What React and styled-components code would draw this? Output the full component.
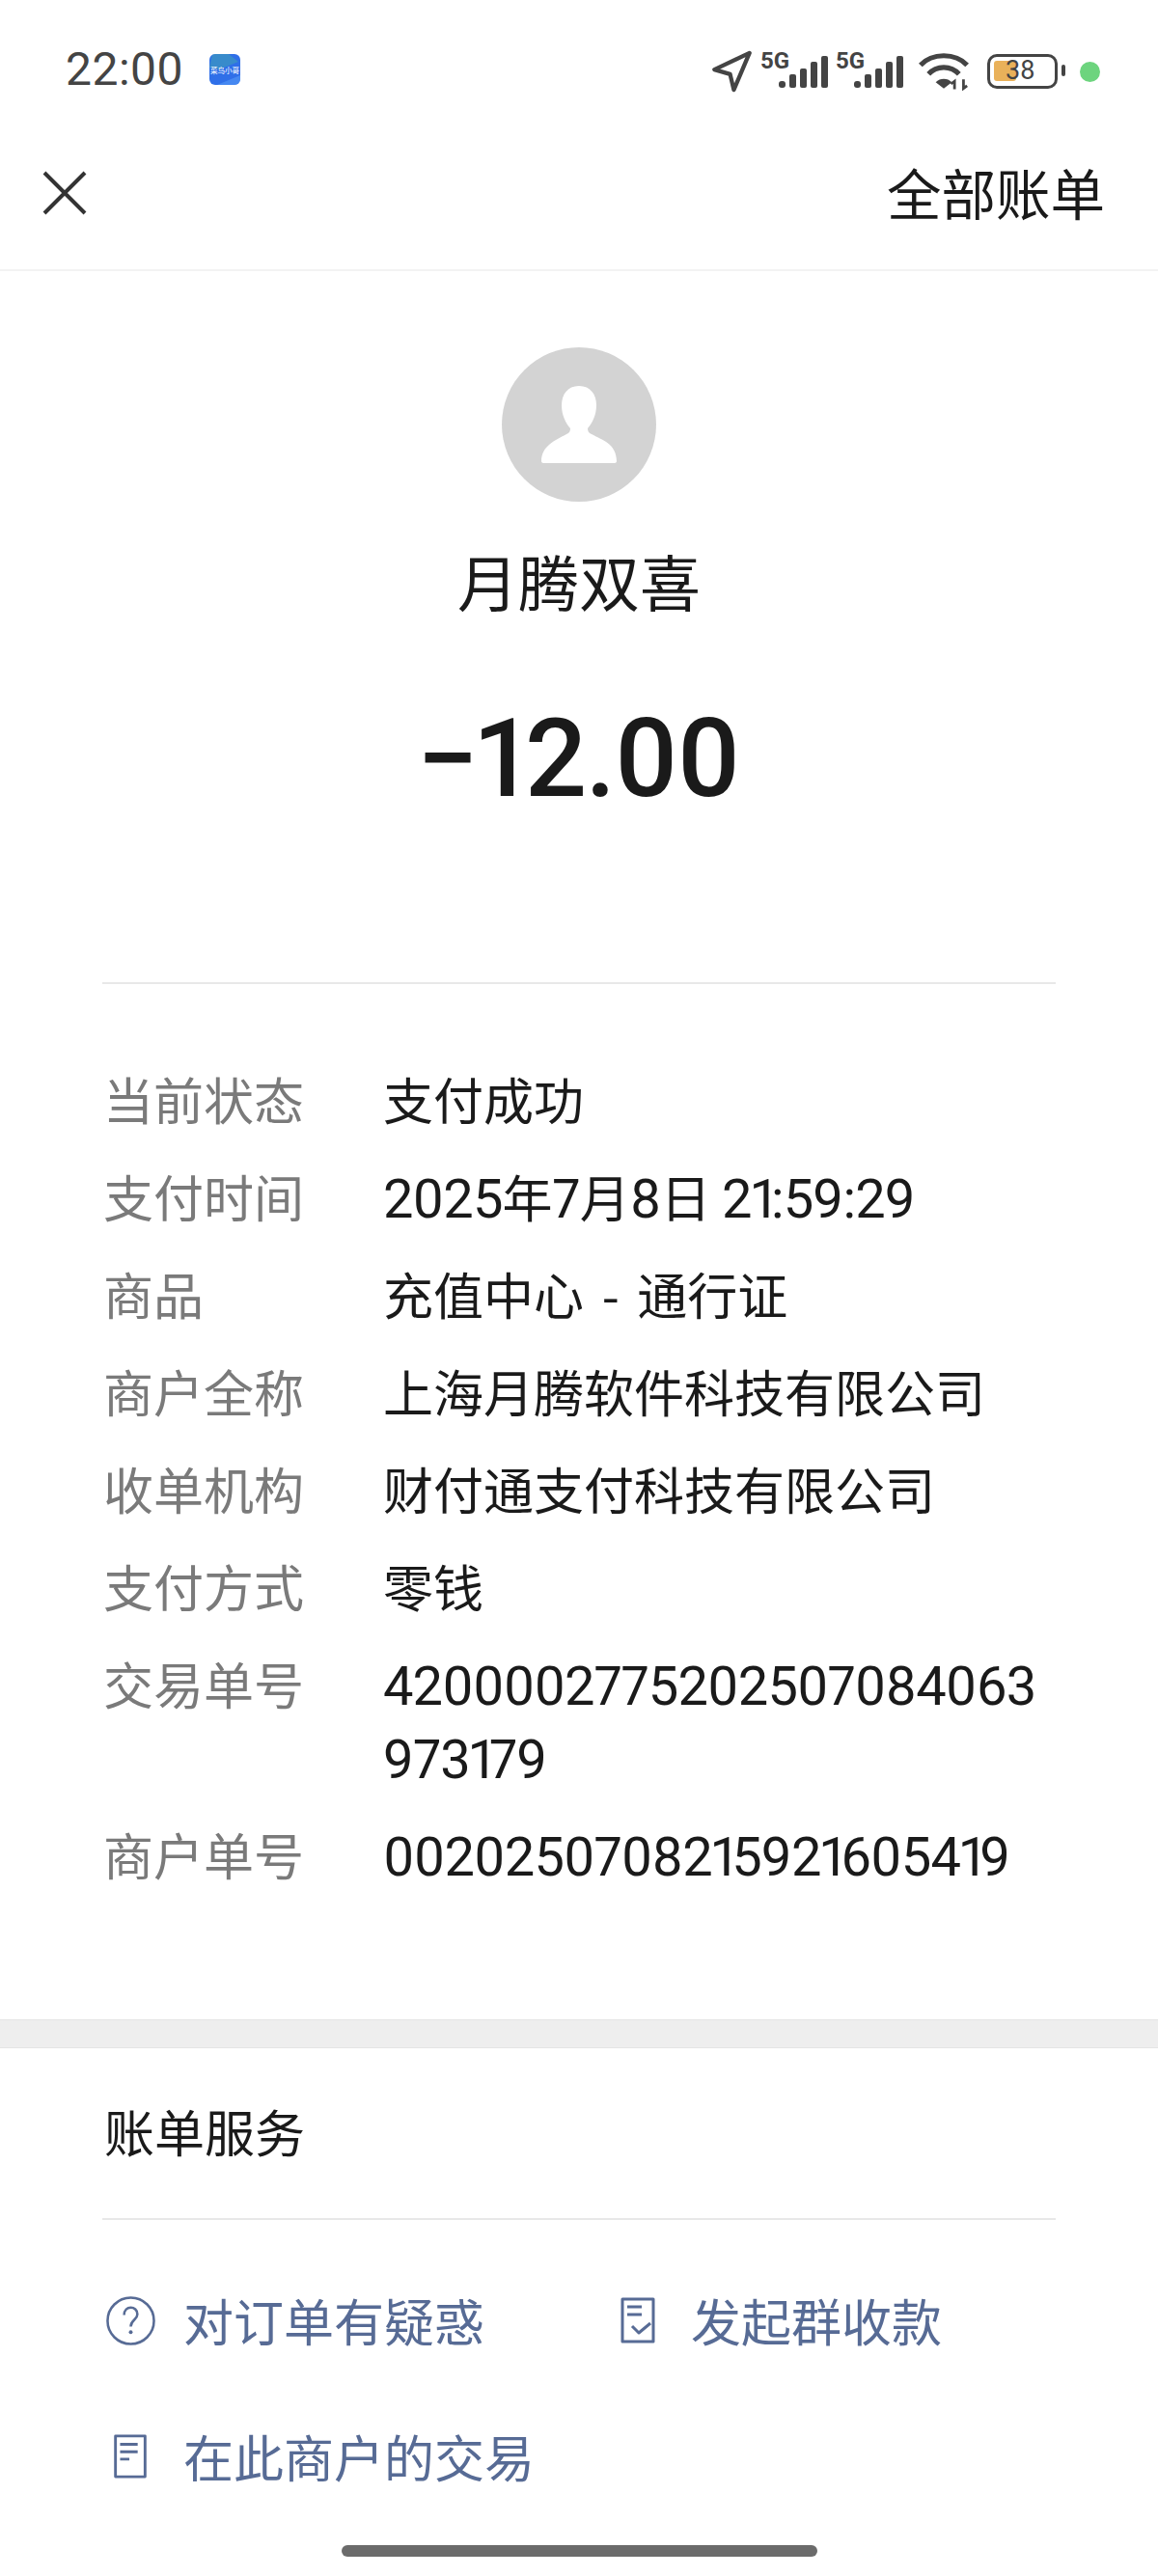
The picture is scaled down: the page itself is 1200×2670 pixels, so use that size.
import styled, { createGlobalStyle } from "styled-components";

const FONT = `Roboto, "Noto Sans CJK SC", sans-serif`;
const CJK = `"Noto Sans CJK SC", sans-serif`;

const GlobalStyle = createGlobalStyle`
  html, body {
    margin: 0;
    padding: 0;
    background: #fff;
  }
`;

const rows = [
  { label: "当前状态", value: "支付成功" },
  { label: "支付时间", value: "2025年7月8日 21:59:29" },
  { label: "商品", value: "充值中心 - 通行证", spaced: true },
  { label: "商户全称", value: "上海月腾软件科技有限公司" },
  { label: "收单机构", value: "财付通支付科技有限公司" },
  { label: "支付方式", value: "零钱" },
  { label: "交易单号", value: "4200002775202507084063973179" },
  { label: "商户单号", value: "0020250708215921605419" },
];

// the "1" in the reference font is narrower than the other digits
const withOnes = (digits) =>
  digits.split(/(1)/).map((part, i) => (i % 2 ? <One key={i}>{part}</One> : part));

// digits are set a bit larger than the chinese text around them
const withDigits = (text) =>
  text.split(/([\d:]+)/).map((part, i) => (i % 2 ? <Digits key={i}>{withOnes(part)}</Digits> : part));

const SignalIcon = () => (
  <svg width="70" height="52" viewBox="0 0 70 52">
    <text x="0" y="23" fontFamily="Roboto, sans-serif" fontWeight="700" fontSize="24" fill="#444">
      5G
    </text>
    <g fill="#444">
      <rect x="19" y="36" width="7" height="7" rx="3" />
      <rect x="30" y="29" width="7" height="14" rx="2" />
      <rect x="41" y="23" width="7" height="20" rx="2" />
      <rect x="52" y="16" width="7" height="27" rx="2" />
      <rect x="63" y="10" width="7" height="33" rx="2" />
    </g>
  </svg>
);

const App = () => {
  return (
    <Page>
      <GlobalStyle />
      <StatusBar>
        <StatusLeft>
          <Clock>22:00</Clock>
          <AppBadge>
            <svg width="32" height="32" viewBox="0 0 32 32">
              <path d="M3 0 L20 0 L30 8 L10 16 L0 14 Z" fill="#3f9fb8" opacity="0.6" />
              <path d="M8 32 L32 22 L32 32 Z" fill="#4f93f5" opacity="0.7" />
            </svg>
            <BadgeText>菜鸟小哥</BadgeText>
          </AppBadge>
        </StatusLeft>
        <StatusRight>
          <svg width="43" height="44" viewBox="0 0 44 46">
            <path
              d="M41 3 L3 21 L20 26 L24 43 Z"
              fill="none"
              stroke="#444"
              strokeWidth="4.5"
              strokeLinejoin="round"
            />
          </svg>
          <SignalPair>
            <SignalIcon />
            <SignalIcon />
          </SignalPair>
          <svg width="52" height="40" viewBox="0 0 56 42">
            <g fill="none" stroke="#444" strokeWidth="5.5">
              <path d="M2 14 C15 0 41 0 54 14" />
              <path d="M11 24 C20 14 36 14 45 24" />
            </g>
            <path d="M19 33 C24 28 32 28 37 33 L28 40 Z" fill="#444" />
            <path d="M40 41 V32 L36 35 M50 30 V40 L54 37" fill="none" stroke="#444" strokeWidth="3" />
          </svg>
          <Battery>
            <BatteryFill />
            <BatteryText>38</BatteryText>
            <BatteryNub />
          </Battery>
          <StatusDot />
        </StatusRight>
      </StatusBar>

      <NavBar>
        <CloseIcon width="46" height="46" viewBox="0 0 46 46">
          <path d="M2 2 L44 44 M44 2 L2 44" stroke="#333" strokeWidth="4" fill="none" />
        </CloseIcon>
        <NavLink>全部账单</NavLink>
      </NavBar>

      <Hero>
        <Avatar>
          <svg width="80" height="80" viewBox="0 0 80 80">
            <path
              d="M40 0 C52 0 58 9 58 20 C58 30 54 38 49 44 C49 47 50 49 53 50 C64 56 79 60 79 78 L79 78 C79 79 78 80 77 80 L3 80 C2 80 1 79 1 78 C1 62 16 56 27 50 C30 49 31 47 31 44 C26 38 22 30 22 20 C22 9 28 0 40 0 Z"
              fill="#fff"
            />
          </svg>
        </Avatar>
        <Merchant>月腾双喜</Merchant>
        <Amount>−12.00</Amount>
      </Hero>

      <Details>
        {rows.map((row) => (
          <Row key={row.label}>
            <RowLabel>{row.label}</RowLabel>
            <RowValue $spaced={row.spaced}>{withDigits(row.value)}</RowValue>
          </Row>
        ))}
      </Details>

      <Band />

      <Services>
        <ServicesTitle>账单服务</ServicesTitle>
        <Links>
          <LinkRow>
            <ServiceLink $width="526px">
              <IconSlot $inset="4px">
                <svg width="51" height="51" viewBox="0 0 52 52">
                  <circle cx="26" cy="26" r="24.5" fill="none" stroke="#576b95" strokeWidth="2.6" />
                  <path
                    d="M19 20 C19 9 33 10 33 19 C33 25 26 25 26 32"
                    fill="none"
                    stroke="#576b95"
                    strokeWidth="2.6"
                  />
                  <circle cx="26" cy="38" r="2" fill="#576b95" />
                </svg>
              </IconSlot>
              对订单有疑惑
            </ServiceLink>
            <ServiceLink>
              <IconSlot $inset="11px">
                <svg width="36" height="48" viewBox="0 0 36 48">
                  <path
                    d="M2 2 H34 V46 H2 Z M7 10 H22 M7 18 H22 M12 30 L19 37 L31 27"
                    fill="none"
                    stroke="#576b95"
                    strokeWidth="3"
                    strokeLinejoin="round"
                  />
                </svg>
              </IconSlot>
              发起群收款
            </ServiceLink>
          </LinkRow>
          <LinkRow>
            <ServiceLink>
              <IconSlot $inset="11px">
                <svg width="36" height="46" viewBox="0 0 36 48">
                  <path
                    d="M2 2 H34 V46 H2 Z M7 11 H26 M7 19 H26 M7 27 H17"
                    fill="none"
                    stroke="#576b95"
                    strokeWidth="3"
                    strokeLinejoin="round"
                  />
                </svg>
              </IconSlot>
              在此商户的交易
            </ServiceLink>
          </LinkRow>
        </Links>
      </Services>

      <HomeBar />
    </Page>
  );
};

const Page = styled.div`
  position: relative;
  width: 1200px;
  height: 2670px;
  display: flex;
  flex-direction: column;
  background: #fff;
  color: #1a1a1a;
  font-family: ${FONT};
  overflow: hidden;
`;

const StatusBar = styled.div`
  height: 146px;
  box-sizing: border-box;
  padding: 48px 60px 0 68px;
  display: flex;
  justify-content: space-between;
  align-items: flex-start;
`;

const StatusLeft = styled.div`
  display: flex;
  align-items: center;
  gap: 27px;
`;

const Clock = styled.span`
  font-size: 48px;
  line-height: 48px;
  letter-spacing: 0.5px;
  color: #444;
`;

const AppBadge = styled.div`
  position: relative;
  width: 32px;
  height: 32px;
  border-radius: 6px;
  overflow: hidden;
  background: #2f6fe8;
  display: flex;
`;

const BadgeText = styled.span`
  position: absolute;
  inset: 0;
  display: flex;
  align-items: center;
  justify-content: center;
  font-family: ${CJK};
  font-size: 7.5px;
  color: #fff;
  white-space: nowrap;
`;

const StatusRight = styled.div`
  height: 60px;
  margin-top: -4px;
  display: flex;
  align-items: center;
  gap: 8px;
`;

const SignalPair = styled.div`
  display: flex;
  gap: 8px;
  margin-right: 8px;
`;

const Battery = styled.div`
  position: relative;
  width: 73px;
  height: 36px;
  box-sizing: border-box;
  border: 3.5px solid #444;
  border-radius: 10px;
  margin-left: 11px;
`;

const BatteryFill = styled.div`
  position: absolute;
  left: 4px;
  top: 4px;
  width: 23px;
  height: 21px;
  border-radius: 3px;
  background: #e9b15a;
`;

const BatteryText = styled.span`
  position: absolute;
  left: 16px;
  top: 0;
  font-size: 27px;
  line-height: 29px;
  color: #444;
`;

const BatteryNub = styled.div`
  position: absolute;
  right: -11px;
  top: 8px;
  width: 4px;
  height: 12px;
  border-radius: 2px;
  background: #444;
`;

const StatusDot = styled.div`
  width: 21px;
  height: 21px;
  border-radius: 50%;
  background: #6dd47e;
  margin-left: 15px;
`;

const NavBar = styled.div`
  height: 135px;
  box-sizing: border-box;
  padding: 0 55px 30px 44px;
  display: flex;
  align-items: center;
  justify-content: space-between;
  border-bottom: 2px solid #f3f3f3;
`;

const CloseIcon = styled.svg`
  margin-top: 4px;
`;

const NavLink = styled.span`
  font-family: ${CJK};
  font-size: 56.5px;
`;

const Hero = styled.div`
  display: flex;
  flex-direction: column;
  align-items: center;
  padding-top: 79px;
  height: 737px;
  box-sizing: border-box;
`;

const Avatar = styled.div`
  width: 160px;
  height: 160px;
  border-radius: 50%;
  background: #d3d3d3;
  display: flex;
  align-items: center;
  justify-content: center;
`;

const Merchant = styled.div`
  margin-top: 38px;
  font-family: ${CJK};
  font-size: 63px;
  line-height: 86px;
`;

const Amount = styled.div`
  margin-top: 78px;
  margin-right: 2px;
  font-size: 113px;
  line-height: 130px;
  font-weight: 500;
  font-feature-settings: "pnum";
  letter-spacing: -1.6px;
`;

const Details = styled.div`
  margin: 0 106px;
  padding-top: 81px;
  height: 1075px;
  box-sizing: border-box;
  border-top: 2px solid #e8e8e8;
  display: flex;
  flex-direction: column;
  gap: 25px;
`;

const Row = styled.div`
  display: grid;
  grid-template-columns: 291px 1fr;
  align-items: baseline;
  font-family: ${CJK};
  font-size: 52px;
  line-height: 76px;
`;

const RowLabel = styled.div`
  color: #7a7a7a;
  padding-left: 1px;
`;

const RowValue = styled.div`
  word-break: break-all;
  word-spacing: ${(p) => (p.$spaced ? "7px" : "0")};
  color: #1a1a1a;
`;

const Digits = styled.span`
  font-family: Roboto, sans-serif;
  font-size: 56px;
  line-height: 1;
  font-feature-settings: "pnum";
  letter-spacing: -0.85px;
`;

const One = styled.span`
  letter-spacing: -4px;
`;

const Band = styled.div`
  height: 30px;
  background: #eeeeee;
  border-top: 1px solid #e4e4e4;
  border-bottom: 1px solid #e4e4e4;
  box-sizing: border-box;
`;

const Services = styled.div`
  margin: 0 106px;
`;

const ServicesTitle = styled.div`
  height: 178px;
  box-sizing: border-box;
  padding: 49px 0 0 2px;
  font-family: ${CJK};
  font-size: 52px;
  line-height: 74px;
  border-bottom: 2px solid #e8e8e8;
`;

const Links = styled.div`
  padding-top: 67px;
  display: flex;
  flex-direction: column;
  gap: 67px;
`;

const LinkRow = styled.div`
  display: flex;
  height: 74px;
`;

const ServiceLink = styled.div`
  width: ${(p) => p.$width || "auto"};
  display: flex;
  align-items: center;
  font-family: ${CJK};
  font-size: 52px;
  line-height: 74px;
  color: #576b95;
`;

const IconSlot = styled.span`
  width: 84px;
  display: flex;
  box-sizing: border-box;
  padding-left: ${(p) => p.$inset};
`;

const HomeBar = styled.div`
  position: absolute;
  top: 2638px;
  left: 354px;
  width: 493px;
  height: 12px;
  border-radius: 6px;
  background: #6b6b6b;
`;

export default App;
